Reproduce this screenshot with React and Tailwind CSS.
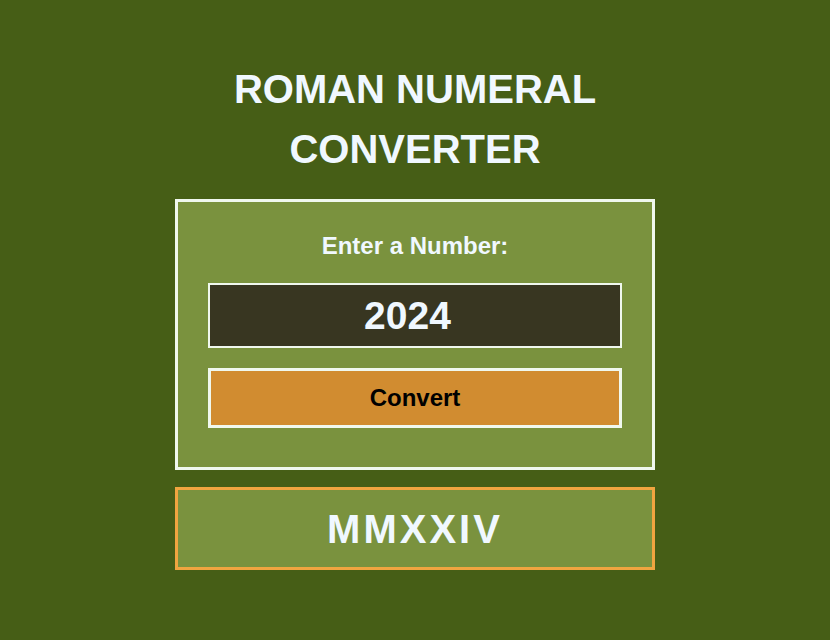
export default function App() {
  return (
    <div
      className="min-h-[640px] w-full bg-[#465e16] flex flex-col items-center pt-[59px] text-[#f0f8ff]"
      style={{ fontFamily: '"Liberation Sans", Arial, sans-serif' }}
    >
      <h1 className="w-[480px] text-center text-[40px] font-bold leading-[60px]">
        ROMAN NUMERAL CONVERTER
      </h1>

      <form
        className="mt-[20px] w-[480px] border-[3px] border-[#f0f8ee] bg-[#7a923e] px-[30px] pt-[30px] pb-[39px] flex flex-col items-center"
        onSubmit={(e) => e.preventDefault()}
      >
        <label className="text-[24px] font-bold leading-[28px]">Enter a Number:</label>
        <input
          className="mt-[23px] h-[65px] w-[414px] border-2 border-[#f0f8ee] bg-[#383621] pr-[15px] text-center text-[39px] font-bold text-[#f0f8ff] outline-none"
          defaultValue="2024"
        />
        <button
          type="submit"
          className="mt-[20px] h-[60px] w-[414px] border-[3px] border-[#f0f8ee] bg-[#d18c30] text-[24px] font-bold text-black"
        >
          Convert
        </button>
      </form>

      <div className="mt-[17px] flex h-[83px] w-[480px] items-center justify-center border-[3px] border-[#f0a540] bg-[#7a923e]">
        <span className="text-[40px] font-bold tracking-[3px]">MMXXIV</span>
      </div>
    </div>
  );
}
